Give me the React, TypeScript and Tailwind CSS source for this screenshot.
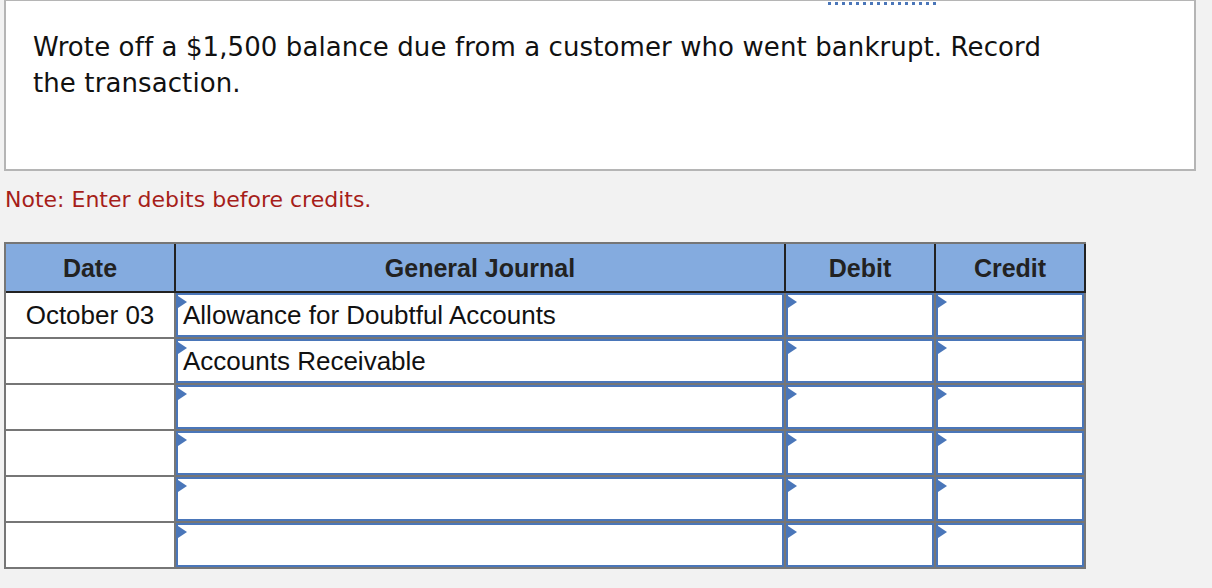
import React from "react";

function Tri() {
  return (
    <div className="absolute left-0 top-[1px] w-0 h-0 border-y-[6px] border-y-transparent border-l-[9px] border-l-[#4a76b9]" />
  );
}

function InputCell({ w, text }: { w: string; text?: string }) {
  return (
    <div className={`${w} h-full border-l-2 border-[#767676]`}>
      <div className="relative h-full border-2 border-[#4a76b9] bg-white flex items-center pl-[5px]">
        <Tri />
        {text ? (
          <span className="text-[26px] leading-[30px] text-[#111] whitespace-nowrap">{text}</span>
        ) : null}
      </div>
    </div>
  );
}

const rows: { date: string; account: string }[] = [
  { date: "October 03", account: "Allowance for Doubtful Accounts" },
  { date: "", account: "Accounts Receivable" },
  { date: "", account: "" },
  { date: "", account: "" },
  { date: "", account: "" },
  { date: "", account: "" },
];

export default function App() {
  return (
    <div className="w-[1212px] h-[588px] overflow-hidden bg-[#f2f2f2]" style={{ fontFamily: '"Liberation Sans", Arial, sans-serif' }}>
      <div
        className="relative ml-[4px] mt-[-1px] w-[1192px] h-[172px] border-2 border-[#b5b5b5] bg-white pl-[27px] pt-[28px]"
        style={{ fontFamily: '"DejaVu Sans", Verdana, sans-serif' }}
      >
        <div className="absolute top-[1px] left-[822px] w-[110px] h-[3px] bg-[repeating-linear-gradient(90deg,#4a76b9_0_3px,transparent_3px_7px)]" />
        <p className="text-[26px] leading-[36px] tracking-[0.1px] text-[#111] whitespace-nowrap">
          Wrote off a $1,500 balance due from a customer who went bankrupt. Record
          <br />
          the transaction.
        </p>
      </div>
      <p
        className="mt-[16px] pl-[5px] text-[22px] leading-[26px] text-[#a61e1a]"
        style={{ fontFamily: '"DejaVu Sans", Verdana, sans-serif' }}
      >
        Note: Enter debits before credits.
      </p>
      <div className="mt-[29px] ml-[4px] w-[1082px] border-l-2 border-t-2 border-b-2 border-[#767676]">
        <div className="flex h-[49px] bg-[#84abdf] border-b-2 border-r-2 border-[#222] text-[25px] leading-[30px] font-bold text-[#222]">
          <div className="w-[168px] flex items-center justify-center">Date</div>
          <div className="w-[610px] border-l-2 border-[#222] flex items-center justify-center">General Journal</div>
          <div className="w-[150px] border-l-2 border-[#222] flex items-center justify-center">Debit</div>
          <div className="w-[150px] border-l-2 border-[#222] flex items-center justify-center">Credit</div>
        </div>
        {rows.map((r, i) => (
          <div
            key={i}
            className={`flex ${i === 0 ? "h-[44px]" : "h-[46px] border-t-2"} border-r-2 border-[#767676] bg-white`}
          >
            <div className="w-[168px] h-full flex items-center justify-center text-[26px] leading-[30px] text-[#111] whitespace-nowrap">
              {r.date}
            </div>
            <InputCell w="w-[610px]" text={r.account} />
            <InputCell w="w-[150px]" />
            <InputCell w="w-[150px]" />
          </div>
        ))}
      </div>
    </div>
  );
}
